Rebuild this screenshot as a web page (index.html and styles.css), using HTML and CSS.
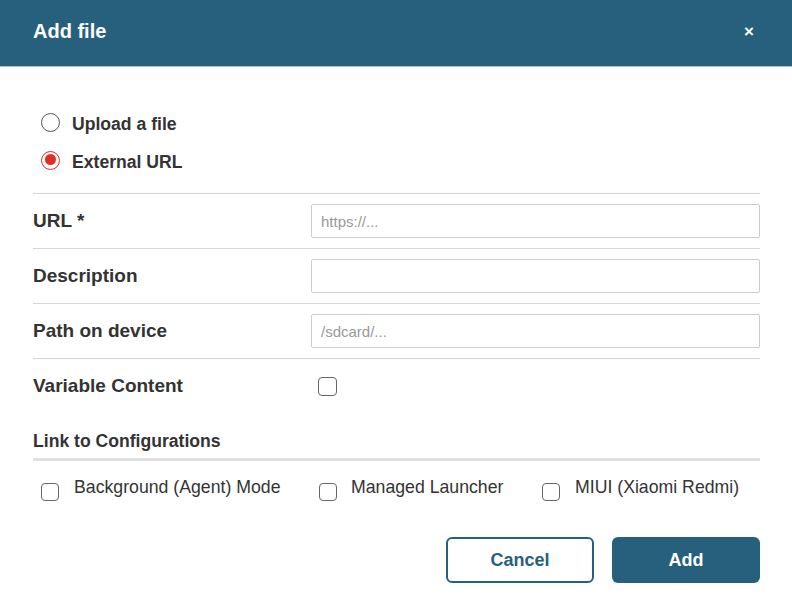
FILE: index.html
```html
<!DOCTYPE html>
<html lang="en">
<head>
    <meta charset="UTF-8">
    <meta name="viewport" content="width=device-width, initial-scale=1.0">
    <title>Add file</title>
    <link rel="stylesheet" href="styles.css">
</head>
<body>

<div class="dialog">
    <div class="dialog-header">
        <h2>Add file</h2>
        <span class="close">&times;</span>
    </div>

    <div class="dialog-body">
        <!-- Origen del archivo -->
        <div class="radio-group">
            <label class="radio"><input type="radio" name="source"> Upload a file</label>
            <label class="radio"><input type="radio" name="source" checked> External URL</label>
        </div>

        <div class="form-row">
            <label>URL *</label>
            <input type="text" placeholder="https://...">
        </div>
        <div class="form-row">
            <label>Description</label>
            <input type="text">
        </div>
        <div class="form-row">
            <label>Path on device</label>
            <input type="text" placeholder="/sdcard/...">
        </div>
        <div class="form-row">
            <label>Variable Content</label>
            <div><input type="checkbox" class="check"></div>
        </div>

        <!-- Configuraciones -->
        <h4 class="section-title">Link to Configurations</h4>
        <div class="configs">
            <label class="config config-1"><input type="checkbox" class="check"> Background (Agent) Mode</label>
            <label class="config config-2"><input type="checkbox" class="check"> Managed Launcher</label>
            <label class="config"><input type="checkbox" class="check"> MIUI (Xiaomi Redmi)</label>
        </div>

        <div class="actions">
            <button class="btn-cancel">Cancel</button>
            <button class="btn-add">Add</button>
        </div>
    </div>
</div>

</body>
</html>
```

FILE: styles.css
```css
body {
    font-family: "Liberation Sans", Arial, sans-serif;
    background-color: #fff;
    color: #333;
    margin: 0;
    padding: 0;
}
.dialog {
    width: 792px;
}
.dialog-header {
    height: 67px;
    background-color: #27607c;
    border-bottom: 1px solid #a9c3d0;
    display: flex;
    align-items: center;
    justify-content: space-between;
    padding: 0 38px 3px 33px;
    box-sizing: border-box;
    color: white;
}
.dialog-header h2 {
    margin: 0;
    font-size: 20px;
    font-weight: bold;
}
.close {
    font-size: 17px;
    font-weight: bold;
    line-height: 1;
}
.dialog-body {
    padding: 38px 32px 0 33px;
}
.radio-group {
    padding-left: 8px;
    margin-bottom: 12px;
}
.radio {
    display: flex;
    align-items: center;
    height: 38px;
    font-size: 17.6px;
    font-weight: bold;
}
.radio input {
    appearance: none;
    width: 19px;
    height: 19px;
    margin: 0 12px 0 0;
    border: 1.5px solid #555;
    border-radius: 50%;
    box-sizing: border-box;
    position: relative;
    top: -2px;
}
.radio input:checked {
    border: 1.5px solid #e52b24;
}
.radio input:checked::after {
    content: "";
    position: absolute;
    left: 2.5px;
    top: 2.5px;
    width: 11px;
    height: 11px;
    border-radius: 50%;
    background-color: #e52b24;
}
.form-row {
    display: grid;
    grid-template-columns: 278px 1fr;
    grid-auto-rows: 34px;
    align-items: center;
    border-top: 1px solid #d6d6d6;
    padding: 10px 0;
}
.form-row label {
    font-size: 19px;
    font-weight: bold;
}
.form-row input[type="text"] {
    height: 34px;
    border: 1px solid #ccc;
    border-radius: 2px;
    padding: 0 9px;
    font-family: inherit;
    font-size: 15px;
    box-sizing: border-box;
    width: 100%;
}
.form-row input::placeholder {
    color: #999;
}
.form-row .check {
    margin-left: 7px;
    width: 19px;
    height: 19px;
}
.check {
    appearance: none;
    width: 18px;
    height: 18px;
    border: 1.5px solid #666;
    border-radius: 4px;
    box-sizing: border-box;
    margin: 0;
    display: block;
}
.section-title {
    margin: 18px 0 0;
    font-size: 17.6px;
    line-height: 20px;
    padding-bottom: 7px;
    border-bottom: 3px solid #e0e0e0;
}
.configs {
    display: flex;
    margin-top: 14px;
    padding-left: 8px;
    font-size: 17.7px;
}
.config {
    display: flex;
    align-items: center;
    gap: 15px;
    height: 24px;
}
.config .check {
    position: relative;
    top: 5px;
}
.config-1 {
    width: 278px;
}
.config-2 {
    width: 223px;
    gap: 14px;
}
.actions {
    display: flex;
    justify-content: flex-end;
    gap: 18px;
    margin-top: 38px;
}
.actions button {
    width: 148px;
    height: 46px;
    border-radius: 6px;
    font-family: inherit;
    font-size: 18px;
    font-weight: bold;
    cursor: pointer;
    box-sizing: border-box;
}
.btn-cancel {
    background-color: white;
    color: #27607c;
    border: 2px solid #27607c;
}
.btn-add {
    background-color: #27607c;
    color: white;
    border: none;
}
```
